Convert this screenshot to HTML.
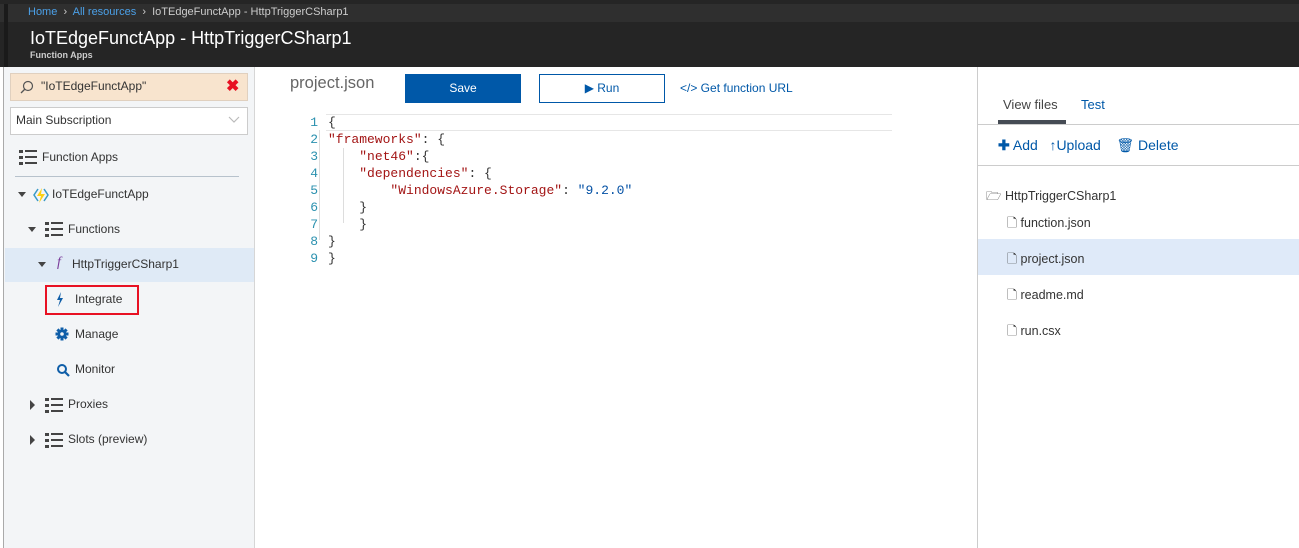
<!DOCTYPE html>
<html><head><style>
*{margin:0;padding:0;box-sizing:border-box}
body{width:1299px;height:548px;overflow:hidden;background:#fff;font-family:"Segoe UI","Liberation Sans",sans-serif;position:relative;font-size:13px;color:#333}
.a{position:absolute}
.top{left:0;top:0;width:1299px;height:67px;background:#252525}
.bc{left:0;top:4px;width:1299px;height:18px;background:#2f2f2f}
.left{left:0;top:67px;width:255px;height:481px;background:#f3f5f7;border-right:1px solid #d6d6d6;border-left:3px solid #fff}
.ln{color:#333;font-size:12px}
.code{font-family:"Liberation Mono",monospace;font-size:13px;line-height:17px}
.num{color:#2b91af;text-align:right;width:20px;left:298px}
.s{color:#a31515}.v{color:#0451a5}
</style></head><body>
<div class="a top"></div>
<div class="a bc"></div>
<div class="a" style="left:4px;top:4px;width:4px;height:63px;background:#1a1a1a"></div>
<div class="a" style="left:28px;top:6px;font-size:11px;color:#ccc"><span style="color:#4ba0e8">Home</span> &nbsp;›&nbsp; <span style="color:#4ba0e8">All resources</span> &nbsp;›&nbsp; IoTEdgeFunctApp - HttpTriggerCSharp1</div>
<div class="a" style="left:30px;top:28px;font-size:18px;color:#fff">IoTEdgeFunctApp - HttpTriggerCSharp1</div>
<div class="a" style="left:30px;top:50px;font-size:9px;color:#ccc;font-weight:bold">Function Apps</div>

<div class="a left"></div>
<div class="a" style="left:3px;top:67px;width:1px;height:481px;background:#aaa"></div>
<div class="a" style="left:10px;top:73px;width:238px;height:28px;background:#f8e4ce;border:1px solid #e0d0bf"></div>
<svg class="a" style="left:20px;top:80px" width="14" height="14"><circle cx="8" cy="6" r="4.5" fill="none" stroke="#555" stroke-width="1.2"/><line x1="5" y1="9" x2="1" y2="13" stroke="#555" stroke-width="1.3"/></svg>
<div class="a" style="left:41px;top:79px;font-size:12px">"IoTEdgeFunctApp"</div>
<div class="a" style="left:226px;top:76px;font-size:16px;color:#e81123;font-weight:bold">✖</div>
<div class="a" style="left:10px;top:107px;width:238px;height:28px;background:#fff;border:1px solid #ccc"></div>
<div class="a" style="left:16px;top:113px;font-size:12px">Main Subscription</div>
<svg class="a" style="left:228px;top:116px" width="12" height="8"><polyline points="1,1 6,6 11,1" fill="none" stroke="#bbb" stroke-width="1.2"/></svg>
<div class="a" style="left:15px;top:176px;width:224px;height:1px;background:#b7c2cc"></div>
<div class="a" style="left:5px;top:248px;width:249px;height:34px;background:#dfeaf6"></div>
<div class="a" style="left:45px;top:285px;width:94px;height:30px;border:2px solid #e81123"></div>

<svg class="a" style="left:0;top:140px" width="255" height="320">
<g fill="#444">
<g transform="translate(19,10)"><rect width="4" height="3"/><rect y="6" width="4" height="3"/><rect y="12" width="4" height="3"/><rect x="6" width="12" height="2"/><rect x="6" y="6" width="12" height="2"/><rect x="6" y="12" width="12" height="2"/></g>
<polygon points="18,52 26,52 22,57"/>
<polygon points="28,87 36,87 32,92"/>
<g transform="translate(45,82)"><rect width="4" height="3"/><rect y="6" width="4" height="3"/><rect y="12" width="4" height="3"/><rect x="6" width="12" height="2"/><rect x="6" y="6" width="12" height="2"/><rect x="6" y="12" width="12" height="2"/></g>
<polygon points="38,122 46,122 42,127"/>
<polygon points="30,260 35,265 30,270"/>
<g transform="translate(45,258)"><rect width="4" height="3"/><rect y="6" width="4" height="3"/><rect y="12" width="4" height="3"/><rect x="6" width="12" height="2"/><rect x="6" y="6" width="12" height="2"/><rect x="6" y="12" width="12" height="2"/></g>
<polygon points="30,295 35,300 30,305"/>
<g transform="translate(45,293)"><rect width="4" height="3"/><rect y="6" width="4" height="3"/><rect y="12" width="4" height="3"/><rect x="6" width="12" height="2"/><rect x="6" y="6" width="12" height="2"/><rect x="6" y="12" width="12" height="2"/></g>
</g>
<polyline points="38,49 34,55 38,61" fill="none" stroke="#3999c6" stroke-width="1.5"/>
<polyline points="44,49 48,55 44,61" fill="none" stroke="#3999c6" stroke-width="1.5"/>
<polygon points="42,48 37,56 41,56 39,63 45,54 41,54" fill="#fcd116"/>
<polygon points="61,152 57,160 60,160 58,167 63,158 60,158" fill="#0f5ea8"/>
<g transform="translate(62,194)" fill="#0f5ea8"><circle r="4.5"/><rect x="-1.5" y="-6.5" width="3" height="13"/><rect x="-6.5" y="-1.5" width="13" height="3"/><rect x="-1.5" y="-6.5" width="3" height="13" transform="rotate(45)"/><rect x="-1.5" y="-6.5" width="3" height="13" transform="rotate(-45)"/><circle r="1.8" fill="#f3f5f7"/></g>
<circle cx="62" cy="229" r="4" fill="none" stroke="#0f5ea8" stroke-width="2"/><line x1="65" y1="232" x2="69" y2="236" stroke="#0f5ea8" stroke-width="2.2"/>
</svg>
<div class="a ln" style="left:42px;top:150px">Function Apps</div>
<div class="a ln" style="left:52px;top:187px">IoTEdgeFunctApp</div>
<div class="a ln" style="left:68px;top:222px">Functions</div>
<div class="a" style="left:57px;top:255px;color:#7a3b9a;font-style:italic;font-family:'Liberation Serif',serif;font-size:14px">f</div>
<div class="a ln" style="left:72px;top:257px">HttpTriggerCSharp1</div>
<div class="a ln" style="left:75px;top:292px">Integrate</div>
<div class="a ln" style="left:75px;top:327px">Manage</div>
<div class="a ln" style="left:75px;top:362px">Monitor</div>
<div class="a ln" style="left:68px;top:397px">Proxies</div>
<div class="a ln" style="left:68px;top:432px">Slots (preview)</div>

<div class="a" style="left:290px;top:74px;font-size:16.5px;color:#666">project.json</div>
<div class="a" style="left:405px;top:74px;width:116px;height:29px;background:#0058a8;color:#fff;font-size:12px;text-align:center;line-height:29px">Save</div>
<div class="a" style="left:539px;top:74px;width:126px;height:29px;border:1px solid #0058a8;color:#0058a8;font-size:12px;text-align:center;line-height:27px">▶ Run</div>
<div class="a" style="left:680px;top:81px;font-size:12px;color:#0058a8">&lt;/&gt; Get function URL</div>

<div class="a" style="left:326px;top:114px;width:566px;height:17px;border:1px solid #e6e6e6;border-width:1px 0"></div>
<div class="a" style="left:319px;top:130px;width:1px;height:110px;background:#ddd"></div>
<div class="a" style="left:343px;top:148px;width:1px;height:75px;background:#ddd"></div>
<div class="a code num" style="top:114px">1<br>2<br>3<br>4<br>5<br>6<br>7<br>8<br>9</div>
<div class="a code" style="left:328px;top:114px;white-space:pre">{
<span class="s">"frameworks"</span>: {
    <span class="s">"net46"</span>:{
    <span class="s">"dependencies"</span>: {
        <span class="s">"WindowsAzure.Storage"</span>: <span class="v">"9.2.0"</span>
    }
    }
}
}</div>

<div class="a" style="left:977px;top:67px;width:1px;height:481px;background:#ccc"></div>
<div class="a" style="left:1003px;top:97px;font-size:13px;color:#444">View files</div>
<div class="a" style="left:1081px;top:97px;font-size:13px;color:#0058a8">Test</div>
<div class="a" style="left:998px;top:120px;width:68px;height:4px;background:#454b54"></div>
<div class="a" style="left:978px;top:124px;width:321px;height:1px;background:#ccc"></div>
<div class="a" style="left:998px;top:137px;font-size:14px;color:#0058a8"><b>✚</b> Add &nbsp;&nbsp;<b>↑</b>Upload &nbsp;&nbsp;&nbsp;🗑 Delete</div>
<div class="a" style="left:978px;top:165px;width:321px;height:1px;background:#ccc"></div>
<div class="a" style="left:978px;top:239px;width:321px;height:36px;background:#dfeaf9"></div>
<div class="a" style="left:986px;top:187px;font-size:12.5px">🗁 HttpTriggerCSharp1</div>
<div class="a" style="left:1007px;top:205px;font-size:12.5px;line-height:36px">🗋 function.json<br>🗋 project.json<br>🗋 readme.md<br>🗋 run.csx</div>
</body></html>
